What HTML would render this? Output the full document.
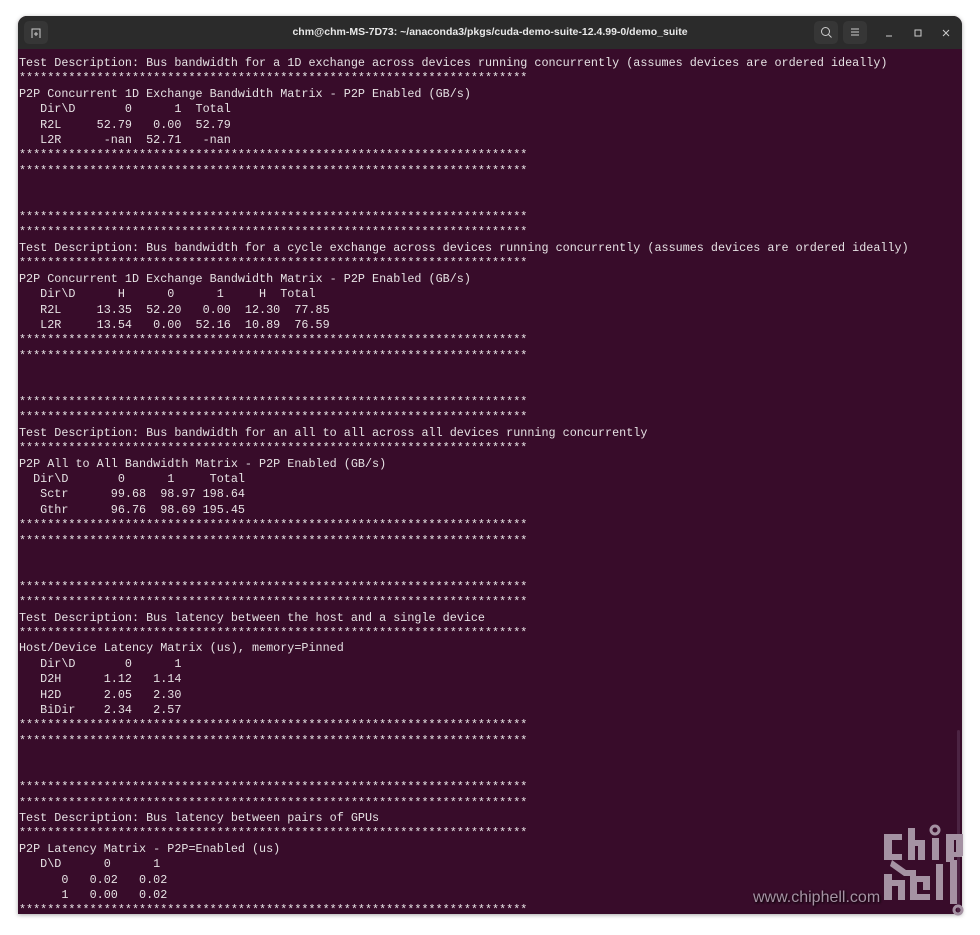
<!DOCTYPE html>
<html><head><meta charset="utf-8"><style>
html,body{margin:0;padding:0;background:#fff;width:980px;height:935px;overflow:hidden;position:relative}
.win{position:absolute;left:18px;top:16px;width:944px;height:898px;background:#380c2a;border-radius:9px 9px 0 0;overflow:hidden;box-shadow:0 1px 4px rgba(0,0,0,.35)}
.tb{position:absolute;left:0;top:0;width:944px;height:33px;background:#2b2b2b;color:#e8e8e8;font:bold 11px "Liberation Sans",sans-serif}
.tb .t{position:absolute;left:0;right:0;top:10px;text-align:center;font-size:10.5px}
.btn{position:absolute;top:5px;width:24px;height:23px;background:#363636;border-radius:5px}
pre{position:absolute;left:1px;top:40px;margin:0;font:11.78px/15.4px "Liberation Mono",monospace;color:#e6e2e4;letter-spacing:0}
.sb{position:absolute;left:939px;top:714px;width:3px;height:182px;background:#4c2443;border-radius:2px}
.wm{position:absolute;color:#a592a3;font-family:"Liberation Sans",sans-serif;text-shadow:1px 1px 2px #000}
</style></head><body>
<div class="win">
<div class="tb">
<div class="btn" style="left:6px"></div>
<svg style="position:absolute;left:12px;top:11px" width="12" height="12" viewBox="0 0 12 12"><path d="M2 11V2h8v9M6 5v4M4 7h4" stroke="#ccc" fill="none" stroke-width="1"/></svg>
<div class="t">chm@chm-MS-7D73: ~/anaconda3/pkgs/cuda-demo-suite-12.4.99-0/demo_suite</div>
<div class="btn" style="left:796px"></div>
<svg style="position:absolute;left:802px;top:10px" width="13" height="13" viewBox="0 0 13 13"><circle cx="5.5" cy="5.5" r="4" stroke="#ccc" fill="none"/><path d="M8.5 8.5l3 3" stroke="#ccc"/></svg>
<div class="btn" style="left:825px"></div>
<svg style="position:absolute;left:832px;top:11px" width="10" height="10" viewBox="0 0 10 10"><path d="M1 2h8M1 5h8M1 8h8" stroke="#ccc"/></svg>
<svg style="position:absolute;left:866px;top:12px" width="10" height="10" viewBox="0 0 10 10"><path d="M2 8h6" stroke="#ccc"/></svg>
<svg style="position:absolute;left:895px;top:12px" width="10" height="10" viewBox="0 0 10 10"><rect x="2" y="2" width="6" height="6" stroke="#ccc" fill="none"/></svg>
<svg style="position:absolute;left:923px;top:12px" width="10" height="10" viewBox="0 0 10 10"><path d="M2 2l6 6M8 2l-6 6" stroke="#ccc"/></svg>
</div>
<pre>Test Description: Bus bandwidth for a 1D exchange across devices running concurrently (assumes devices are ordered ideally)
************************************************************************
P2P Concurrent 1D Exchange Bandwidth Matrix - P2P Enabled (GB/s)
   Dir\D       0      1  Total
   R2L     52.79   0.00  52.79
   L2R      -nan  52.71   -nan
************************************************************************
************************************************************************


************************************************************************
************************************************************************
Test Description: Bus bandwidth for a cycle exchange across devices running concurrently (assumes devices are ordered ideally)
************************************************************************
P2P Concurrent 1D Exchange Bandwidth Matrix - P2P Enabled (GB/s)
   Dir\D      H      0      1     H  Total
   R2L     13.35  52.20   0.00  12.30  77.85
   L2R     13.54   0.00  52.16  10.89  76.59
************************************************************************
************************************************************************


************************************************************************
************************************************************************
Test Description: Bus bandwidth for an all to all across all devices running concurrently
************************************************************************
P2P All to All Bandwidth Matrix - P2P Enabled (GB/s)
  Dir\D       0      1     Total
   Sctr      99.68  98.97 198.64
   Gthr      96.76  98.69 195.45
************************************************************************
************************************************************************


************************************************************************
************************************************************************
Test Description: Bus latency between the host and a single device
************************************************************************
Host/Device Latency Matrix (us), memory=Pinned
   Dir\D       0      1
   D2H      1.12   1.14
   H2D      2.05   2.30
   BiDir    2.34   2.57
************************************************************************
************************************************************************


************************************************************************
************************************************************************
Test Description: Bus latency between pairs of GPUs
************************************************************************
P2P Latency Matrix - P2P=Enabled (us)
   D\D      0      1
      0   0.02   0.02
      1   0.00   0.02
************************************************************************</pre>
<div class="sb"></div>
</div>
<div class="wm" style="left:753px;top:889px;font-size:16px">www.chiphell.com</div>
<svg style="position:absolute;left:880px;top:820px" width="90" height="100" viewBox="0 0 90 100">
<g fill="#a592a3">
<rect x="4" y="14" width="8" height="26"/><rect x="4" y="14" width="18" height="6"/><rect x="4" y="34" width="18" height="6"/>
<rect x="28" y="8" width="7" height="32"/><rect x="28" y="20" width="16" height="6"/><rect x="38" y="20" width="7" height="20"/>
<rect x="52" y="18" width="7" height="22"/><circle cx="55" cy="10" r="4" fill="none" stroke="#a592a3" stroke-width="3"/>
<rect x="66" y="14" width="8" height="28"/><rect x="66" y="14" width="16" height="6"/><rect x="76" y="14" width="7" height="22"/><rect x="66" y="32" width="16" height="5"/>
<path d="M12 40l14 10h10v6H24L10 46z"/>
<rect x="4" y="54" width="8" height="26"/><rect x="4" y="60" width="20" height="6"/><rect x="18" y="60" width="7" height="20"/>
<rect x="30" y="56" width="20" height="6"/><rect x="30" y="56" width="7" height="24"/><rect x="30" y="74" width="20" height="6"/><rect x="43" y="56" width="7" height="14"/>
<rect x="56" y="44" width="7" height="36"/>
<rect x="70" y="40" width="7" height="44"/><circle cx="78" cy="90" r="4" fill="none" stroke="#a592a3" stroke-width="3"/>
</g></svg>
</body></html>
